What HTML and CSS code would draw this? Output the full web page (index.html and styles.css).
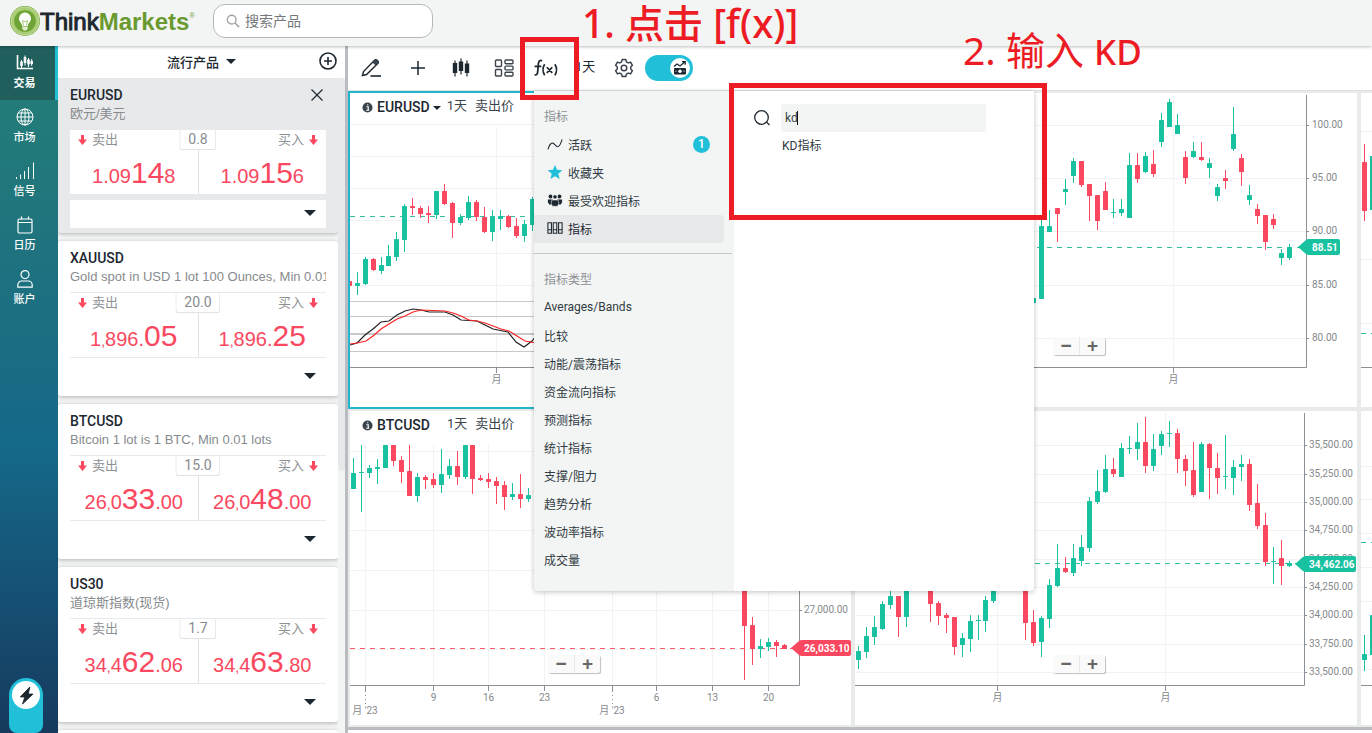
FILE: index.html
```html
<!DOCTYPE html>
<html lang="zh-CN">
<head>
<meta charset="utf-8">
<title>ThinkMarkets</title>
<link rel="stylesheet" href="styles.css">
</head>
<body>
<header class="topbar">
  <a class="logo" href="#" aria-label="ThinkMarkets">
    <svg class="logo-mark" viewBox="0 0 30 30"><circle cx="15" cy="15" r="15" fill="#6ea336"/><circle cx="15" cy="15" r="12.6" fill="none" stroke="#a9cc74" stroke-width="3.6"/><circle cx="15" cy="15" r="14" fill="none" stroke="#c3dc9c" stroke-width="0.8"/><path d="M15 6.500a6 6 0 0 0-6 6c0 3.400 3 4.500 3.200 7.500h5.600c.2-3 3.200-4.100 3.200-7.500a6 6 0 0 0-6-6z" fill="#fff"/><path d="M12.300 20.600h5.400v2.200l-1.500 1.600h-2.400l-1.500-1.600z" fill="#e4f0d2"/><path d="M13.500 19.500l-1-5 2.500 1.500 2.500-1.500-1 5" fill="none" stroke="#9cc267" stroke-width="0.9"/></svg>
    <span class="logo-text">Think<b>Markets</b><sup>®</sup></span>
  </a>
  <label class="search">
    <svg viewBox="0 0 16 16"><circle cx="6.500" cy="6.500" r="5" fill="none" stroke="#a3a6a8" stroke-width="1.600"/><path d="M10.300 10.300L15 15" stroke="#a3a6a8" stroke-width="1.800"/></svg>
    <input type="text" placeholder="搜索产品" aria-label="搜索产品">
  </label>
</header>

<div class="layout">
  <nav class="sidebar">
    <a class="nav-item active" href="#"><svg viewBox="0 0 18 18"><path d="M1.500 1v13.500H17" fill="none" stroke="#fff" stroke-width="1.600"/><path d="M5.500 6v8M9 1.500v10M12.500 4v9M15.700 5v7" stroke="#fff"/><path d="M5.500 7.500v4.500M9 3v6M12.500 5.500v5M15.700 7v3" stroke="#fff" stroke-width="2.600"/></svg>交易</a>
    <a class="nav-item" href="#"><svg viewBox="0 0 18 18" fill="none" stroke="#fff"><circle cx="9" cy="9" r="8"/><ellipse cx="9" cy="9" rx="4" ry="8"/><path d="M9 1v16M1 9h16M2.300 5h13.400M2.300 13h13.400"/></svg>市场</a>
    <a class="nav-item" href="#"><svg viewBox="0 0 18 18" stroke="#fff"><path d="M.5 15v2M4.500 12.500V17M8.500 9v8M12.500 5v12M17.500 .5V17"/></svg>信号</a>
    <a class="nav-item" href="#"><svg viewBox="0 0 18 18" fill="none" stroke="#fff" stroke-width="1.200"><rect x="2" y="3" width="14" height="14" rx="1.500"/><path d="M2 6.500h14M5.500 .5v3M12.500 .5v3"/></svg>日历</a>
    <a class="nav-item" href="#"><svg viewBox="0 0 18 18" fill="none" stroke="#fff" stroke-width="1.200"><circle cx="9" cy="4.600" r="4"/><path d="M1.800 17.200v-2.200a4 4 0 0 1 4-4h6.400a4 4 0 0 1 4 4v2.200z"/></svg>账户</a>
    <button class="quick" aria-label="快速交易"><span><svg viewBox="0 0 18 20"><path d="M12.500 1L2.500 11.500h4.800L4.800 19 15.800 8.500h-5z" fill="#1d2730" stroke="#1d2730" stroke-linejoin="round"/></svg></span></button>
  </nav>

  <aside class="watch">
    <div class="watch-head">
      <button class="watch-title">流行产品<i class="tri"></i></button>
      <button class="add" aria-label="添加"><svg viewBox="0 0 18 18" fill="none" stroke="#1d2730" stroke-width="1.600"><circle cx="9" cy="9" r="8"/><path d="M9 5v8M5 9h8"/></svg></button>
    </div>
    <div class="watch-body">
      <div class="cards">
        <article class="card selected">
          <h2>EURUSD</h2><p class="desc">欧元/美元</p>
          <button class="close" aria-label="关闭"><svg viewBox="0 0 14 14"><path d="M1.500 1.500l11 11M12.500 1.500l-11 11" stroke="#1d2730" stroke-width="1.200"/></svg></button>
          <div class="quote">
            <button class="side"><span class="lab"><svg class="dn" viewBox="0 0 10 11"><path d="M3.300 0h3.400v5H10L5 11 0 5h3.300z"/></svg>卖出</span><span class="px">1.09<b>14</b>8</span></button>
            <button class="side buy"><span class="lab">买入<svg class="dn" viewBox="0 0 10 11"><path d="M3.300 0h3.400v5H10L5 11 0 5h3.300z"/></svg></span><span class="px">1.09<b>15</b>6</span></button>
            <span class="spread">0.8</span>
          </div>
          <button class="more" aria-label="展开"><i class="tri"></i></button>
        </article>
        <article class="card">
          <h2>XAUUSD</h2><p class="desc">Gold spot in USD 1 lot 100 Ounces, Min 0.01 lots</p>
          <div class="quote">
            <button class="side"><span class="lab"><svg class="dn" viewBox="0 0 10 11"><path d="M3.300 0h3.400v5H10L5 11 0 5h3.300z"/></svg>卖出</span><span class="px">1<small>,</small>896.<b>05</b></span></button>
            <button class="side buy"><span class="lab">买入<svg class="dn" viewBox="0 0 10 11"><path d="M3.300 0h3.400v5H10L5 11 0 5h3.300z"/></svg></span><span class="px">1<small>,</small>896.<b>25</b></span></button>
            <span class="spread">20.0</span>
          </div>
          <button class="more" aria-label="展开"><i class="tri"></i></button>
        </article>
        <article class="card">
          <h2>BTCUSD</h2><p class="desc">Bitcoin 1 lot is 1 BTC, Min 0.01 lots</p>
          <div class="quote">
            <button class="side"><span class="lab"><svg class="dn" viewBox="0 0 10 11"><path d="M3.300 0h3.400v5H10L5 11 0 5h3.300z"/></svg>卖出</span><span class="px">26<small>,</small>0<b>33</b>.00</span></button>
            <button class="side buy"><span class="lab">买入<svg class="dn" viewBox="0 0 10 11"><path d="M3.300 0h3.400v5H10L5 11 0 5h3.300z"/></svg></span><span class="px">26<small>,</small>0<b>48</b>.00</span></button>
            <span class="spread">15.0</span>
          </div>
          <button class="more" aria-label="展开"><i class="tri"></i></button>
        </article>
        <article class="card">
          <h2>US30</h2><p class="desc">道琼斯指数(现货)</p>
          <div class="quote">
            <button class="side"><span class="lab"><svg class="dn" viewBox="0 0 10 11"><path d="M3.300 0h3.400v5H10L5 11 0 5h3.300z"/></svg>卖出</span><span class="px">34<small>,</small>4<b>62</b>.06</span></button>
            <button class="side buy"><span class="lab">买入<svg class="dn" viewBox="0 0 10 11"><path d="M3.300 0h3.400v5H10L5 11 0 5h3.300z"/></svg></span><span class="px">34<small>,</small>4<b>63</b>.80</span></button>
            <span class="spread">1.7</span>
          </div>
          <button class="more" aria-label="展开"><i class="tri"></i></button>
        </article>
        <article class="card"></article>
      </div>
      <div class="scroll"><i></i></div>
    </div>
  </aside>

  <main class="work">
    <div class="tools">
      <button aria-label="画图"><svg viewBox="0 0 20 20"><path d="M1.500 17.500l1-4L13.500 2.300a1.800 1.800 0 0 1 2.600 0l.7.7a1.800 1.800 0 0 1 0 2.600L5.500 16.500z" fill="none" stroke="#1d2730" stroke-width="1.400"/><path d="M11.500 4.500l3.300 3.200 2.200-2.200a2 2 0 0 0 0-2.600l-.7-.6a2 2 0 0 0-2.600 0z" fill="#3b444c"/><path d="M9.500 18h11" stroke="#1d2730" stroke-width="1.600"/></svg></button>
      <button class="insert" aria-label="添加"><svg viewBox="0 0 20 20"><path d="M10 3v14M3 10h14" stroke="#1d2730" stroke-width="1.500"/></svg></button>
      <button aria-label="图表类型"><svg viewBox="0 0 20 20"><path d="M4 2.500v16M10 .5v16M16 2.500v16" stroke="#1d2730" stroke-width="1.200"/><path d="M1.800 5h4.400v10H1.800zM7.800 3.500h4.400V13H7.800zM13.800 5.500h4.400V15h-4.400z" fill="#1d2730"/></svg></button>
      <button aria-label="布局"><svg viewBox="0 0 20 20" fill="none" stroke="#3b444c" stroke-width="1.400"><rect x="1.500" y="2" width="6" height="6.500" rx="1"/><rect x="1.500" y="11.500" width="6" height="6.500" rx="1"/><rect x="11" y="2" width="8" height="3.800" rx="1"/><rect x="11" y="8.100" width="8" height="3.800" rx="1"/><rect x="11" y="14.200" width="8" height="3.800" rx="1"/></svg></button>
      <button class="fx" aria-label="指标"><svg viewBox="0 0 24 20" fill="none" stroke="#1d2730" stroke-width="1.700"><path d="M8.800 2.600C6.500 1.500 5.500 3 5.200 5.200L4.500 13c-.2 2.500-1 3.500-3 3M1.500 8h6.500"/><path d="M11.200 6c-2 3-2 7.500 0 10.500M21 6c2 3 2 7.500 0 10.500M13.300 8.800l5.200 5.400M18.500 8.800l-5.200 5.400"/></svg></button>
      <button class="period">1天</button>
      <button aria-label="设置"><svg viewBox="0 0 20 20" fill="none" stroke="#3b444c" stroke-width="1.500"><path d="M8.200 1.500h3.600l.6 2.400 1.800 1 2.400-.7 1.800 3.100-1.700 1.700v2l1.700 1.700-1.800 3.100-2.400-.7-1.800 1-.6 2.400H8.200l-.6-2.400-1.800-1-2.400.7-1.800-3.100L3.300 11V9L1.600 7.300l1.800-3.100 2.400.7 1.800-1z" stroke-linejoin="round"/><circle cx="10" cy="10" r="2.800"/></svg></button>
      <button class="toggle" role="switch" aria-checked="true" aria-label="交易面板"><span><svg viewBox="0 0 14 14"><path d="M1 5.500l3-2.500 3 2 5-4.200M9 .7h3.200v3" fill="none" stroke="#1d2730" stroke-width="1.300"/><rect x="1" y="7" width="12" height="6.500" rx="1" fill="#1d2730"/><circle cx="7" cy="10.200" r="1.700" fill="#fff"/><path d="M2.500 10.200h1M10.500 10.200h1" stroke="#fff"/></svg></span></button>
    </div>

    <div class="desk">
      <section class="pane active">
        <div class="pane-head"><svg viewBox="0 0 12 12"><circle cx="6" cy="6" r="5.500"/><path d="M4.800 5.200h2v3.500M4.500 9h3.400M5.600 3h1.200" stroke="#fff" stroke-width="1.300" fill="none"/></svg><b>EURUSD</b><i class="tri small"></i><span>1天</span><span class="kind">卖出价</span></div>
        <svg class="plot" id="eurusd" viewBox="350 93 501 314" preserveAspectRatio="xMinYMin slice"></svg>
      </section>
      <section class="pane">
        <svg class="plot" id="oil" viewBox="855 93 502 314" preserveAspectRatio="xMinYMin slice"></svg>
        <div class="zoomer"><button aria-label="缩小">−</button><button aria-label="放大">+</button></div>
      </section>
      <section class="pane edge">
        <svg class="plot" id="edge1" viewBox="1361 93 11 314" preserveAspectRatio="xMinYMin slice"></svg>
      </section>
      <section class="pane">
        <div class="pane-head"><svg viewBox="0 0 12 12"><circle cx="6" cy="6" r="5.500"/><path d="M4.800 5.200h2v3.500M4.500 9h3.400M5.600 3h1.200" stroke="#fff" stroke-width="1.300" fill="none"/></svg><b>BTCUSD</b><i class="tri small none"></i><span>1天</span><span class="kind">卖出价</span></div>
        <svg class="plot" id="btcusd" viewBox="350 411 501 314" preserveAspectRatio="xMinYMin slice"></svg>
        <div class="zoomer"><button aria-label="缩小">−</button><button aria-label="放大">+</button></div>
      </section>
      <section class="pane">
        <svg class="plot" id="us30" viewBox="855 411 502 314" preserveAspectRatio="xMinYMin slice"></svg>
        <div class="zoomer"><button aria-label="缩小">−</button><button aria-label="放大">+</button></div>
      </section>
      <section class="pane edge">
        <svg class="plot" id="edge2" viewBox="1361 411 11 314" preserveAspectRatio="xMinYMin slice"></svg>
      </section>

      <div class="popup">
        <div class="menu">
          <h3>指标</h3>
          <button><svg viewBox="0 0 18 14"><path d="M1 13C3 8 4 5.500 6.500 6c2.500.5 3 4 5.500 4 2.500 0 3.500-4 5-8" fill="none" stroke="#1d2730" stroke-width="1.200"/></svg>活跃<em>1</em></button>
          <button><svg viewBox="0 0 18 18"><path d="M9 1l2.300 5.600 6 .5-4.600 3.900 1.500 5.900L9 13.700 3.800 16.900 5.300 11 .7 7.100l6-.5z" fill="#22bfd9"/></svg>收藏夹</button>
          <button><svg viewBox="0 0 18 16" fill="#1d2730"><circle cx="4" cy="4" r="2.200"/><circle cx="14" cy="4" r="2.200"/><circle cx="9" cy="4.500" r="2.500" stroke="#f3f5f4"/><path d="M1 7.500h5.500L8 13H2.500L1 10.500zM17 7.500h-5.500L10 13h5.500l1.500-2.500z"/><path d="M5.500 8h7l.8 3.500L12 15H6l-1.300-3.500z" stroke="#f3f5f4" stroke-width=".6"/></svg>最受欢迎指标</button>
          <button class="on"><svg viewBox="0 0 18 14" fill="none" stroke="#1d2730" stroke-width="1.200"><path d="M1 1h4v12H1zM7 1h4v12H7zM13 1h4v12h-4zM1 9h4M7 9h4M13 9h4"/></svg>指标</button>
          <hr>
          <h3>指标类型</h3>
          <button>Averages/Bands</button>
          <button>比较</button>
          <button>动能/震荡指标</button>
          <button>资金流向指标</button>
          <button>预测指标</button>
          <button>统计指标</button>
          <button>支撑/阻力</button>
          <button>趋势分析</button>
          <button>波动率指标</button>
          <button>成交量</button>
        </div>
        <div class="results">
          <label class="find"><svg viewBox="0 0 16 16"><circle cx="7.500" cy="7.500" r="6.800" fill="none" stroke="#1d2730" stroke-width="1.300"/><path d="M12.500 12l3 3" stroke="#1d2730" stroke-width="1.300"/></svg><input type="text" value="kd" aria-label="搜索指标"><i class="caret"></i></label>
          <button class="hit">KD指标</button>
        </div>
      </div>
    </div>
  </main>
</div>

<div class="frame frame-fx"></div>
<div class="frame frame-find"></div>
<div class="note note-one">1. 点击 [f(x)]</div>
<div class="note note-two">2. 输入 <span>KD</span></div>
<script src="charts.js"></script>
</body>
</html>
```
FILE: styles.css
```css
* { box-sizing: border-box; }
body {
  margin: 0;
  height: 100vh;
  overflow: hidden;
  display: flex;
  flex-direction: column;
  position: relative;
  background: #fff;
  color: #1d2730;
  font-family: Roboto, "Noto Sans CJK SC", sans-serif;
  font-size: 12px;
}
button {
  font: inherit;
  color: inherit;
  background: none;
  border: 0;
  padding: 0;
  margin: 0;
}
a { color: inherit; text-decoration: none; }
svg { display: block; flex: none; }
h2, h3, p { margin: 0; }

.topbar {
  flex: none;
  height: 46px;
  display: flex;
  align-items: flex-start;
  gap: 20px;
  padding: 4px 10px;
  background: #f3f5f4;
  box-shadow: 0 1px 3px rgba(0, 0, 0, 0.25);
  z-index: 2;
}
.logo { display: flex; align-items: center; height: 34px; width: 183px; }
.logo-mark { width: 30px; height: 30px; }
.logo-text {
  font-family: "Liberation Sans", sans-serif;
  font-size: 24px;
  line-height: 34px;
  padding-top: 2px;
  white-space: nowrap;
  -webkit-text-stroke: 1px currentColor;
}
.logo-text b { color: #6a9a2f; -webkit-text-stroke: 0; }
.logo-text sup { font-size: 7px; color: #6a9a2f; vertical-align: 12px; line-height: 0; -webkit-text-stroke: 0; }
.search {
  width: 220px;
  height: 34px;
  display: flex;
  align-items: center;
  gap: 5px;
  padding: 0 12px;
  border: 1px solid #b5b8ba;
  border-radius: 12px;
  background: #fff;
}
.search svg { width: 14px; height: 14px; }
.search input {
  flex: 1;
  min-width: 0;
  border: 0;
  outline: 0;
  padding: 0;
  background: none;
  font: 14px Roboto, "Noto Sans CJK SC", sans-serif;
}
.search input::placeholder { color: #75797c; }

.layout { flex: 1; min-height: 0; display: flex; }

.sidebar {
  width: 58px;
  flex: none;
  display: flex;
  flex-direction: column;
  background: linear-gradient(#237d78 0, #22797a 15%, #1b6c83 45%, #15698a 58%, #163a5e 100%);
  color: #fff;
}
.nav-item {
  height: 54px;
  display: flex;
  flex-direction: column;
  align-items: center;
  gap: 3px;
  padding: 8px 6px 0 0;
  border-right: 3px solid transparent;
  font-size: 11px;
  line-height: 18px;
  font-weight: 500;
}
.nav-item.active { background: #205f5c; border-color: #22bfd9; font-weight: 700; }
.nav-item svg { width: 18px; height: 18px; }
.quick {
  width: 34px;
  height: 55px;
  margin: auto 0 0 9px;
  padding: 3px;
  border-radius: 17px 17px 8px 8px;
  background: #22bfd9;
  display: flex;
}
.quick span {
  width: 28px;
  height: 28px;
  border-radius: 50%;
  background: #fff;
  display: flex;
  align-items: center;
  justify-content: center;
}
.quick svg { width: 17px; height: 19px; }

.tri {
  display: inline-block;
  border: 6px solid transparent;
  border-top-color: #1d2730;
  border-bottom: 0;
}
.watch { width: 287px; flex: none; display: flex; flex-direction: column; }
.watch-head {
  height: 32px;
  flex: none;
  display: flex;
  align-items: center;
  justify-content: flex-end;
  gap: 83px;
  padding: 0 8px 2px;
}
.watch-title { display: flex; align-items: center; gap: 7px; font-size: 13px; font-weight: 500; }
.watch-title .tri { border-width: 5px; border-bottom: 0; }
.add svg { width: 18px; height: 18px; }
.watch-body { flex: 1; min-height: 0; display: flex; background: #f3f5f4; }
.cards { flex: 1; min-width: 0; display: flex; flex-direction: column; gap: 8px; overflow: hidden; }
.scroll { width: 7px; }
.scroll i { display: block; height: 60%; border-radius: 4px; background: #e6e8ea; }
.card {
  position: relative;
  flex: none;
  height: 155px;
  padding: 8px 12px 5px;
  background: #fff;
  border-radius: 3px;
  box-shadow: 0 1px 4px rgba(0, 0, 0, 0.28);
}
.card.selected { background: #e7e9eb; }
.card h2 { font-size: 14px; line-height: 19px; font-weight: 500; }
.desc {
  font: 13px/18px "Liberation Sans", "Noto Sans CJK SC", sans-serif;
  height: 24px;
  color: #878b8e;
  white-space: nowrap;
  overflow: hidden;
}
.close { position: absolute; right: 14px; top: 10px; }
.close svg { width: 14px; height: 14px; }
.quote {
  position: relative;
  display: flex;
  height: 66px;
  border: solid #e7e9eb;
  border-width: 1px 0;
  background: #fff;
}
.side {
  flex: 1;
  display: flex;
  flex-direction: column;
  align-items: center;
  justify-content: flex-start;
  color: #fa4860;
}
.side + .side { border-left: 1px solid #e0e2e4; }
.lab {
  align-self: stretch;
  display: flex;
  align-items: center;
  gap: 5px;
  height: 22px;
  padding: 0 8px;
  font-size: 13px;
  line-height: 20px;
  color: #8d9194;
}
.buy .lab { justify-content: flex-end; }
.dn { width: 9px; height: 10px; fill: #fa4860; }
.px { font: 20px/46px "Liberation Sans", sans-serif; white-space: nowrap; }
.px b { font-size: 30px; font-weight: 400; }
.px small { font-size: 14px; }
.spread {
  position: absolute;
  left: 50%;
  top: 0;
  transform: translateX(-50%);
  padding: 0 8px;
  font: 14px/19px Roboto, sans-serif;
  color: #878b8e;
  background: #fff;
  border: 1px solid #e0e2e4;
  border-top: 0;
  border-radius: 0 0 3px 3px;
}
.more {
  width: 100%;
  height: 28px;
  margin-top: 5px;
  padding: 0 10px 2px 0;
  background: #fff;
  display: flex;
  align-items: center;
  justify-content: flex-end;
}

.work {
  flex: 1;
  min-width: 0;
  display: flex;
  flex-direction: column;
  border-left: 3px solid #b9bcc1;
}
.tools {
  height: 45px;
  flex: none;
  display: flex;
  align-items: center;
  gap: 23px;
  padding: 0 13px;
  border-bottom: 1px solid #dfe2e3;
}
.tools > button > svg { width: 20px; height: 20px; }
.tools > .insert { margin-left: 4px; }
.tools > .fx { margin-left: -4px; }
.tools > .fx svg { width: 25px; height: 21px; }
.tools .period { font-size: 13px; margin-left: -6px; line-height: 18px; padding-bottom: 2px; }
.tools .period + button { margin-left: -4px; }
.toggle {
  width: 48px;
  height: 26px;
  padding: 3px;
  margin-left: -12px;
  border-radius: 13px;
  background: #22bfd9;
  display: flex;
  justify-content: flex-end;
}
.tools > .toggle { padding: 3px; }
.toggle span { width: 20px; height: 20px; border-radius: 50%; background: #fff; display: flex; align-items: center; justify-content: center; }
.toggle svg { width: 14px; height: 14px; }

.desk {
  flex: 1;
  min-height: 0;
  position: relative;
  display: grid;
  grid-template-columns: 505fr 506fr 13fr;
  grid-template-rows: minmax(0, 1fr) minmax(0, 1fr);
  border-bottom: 3px solid #b9bcc1;
  margin-bottom: 3px;
}
.pane { position: relative; min-width: 0; border: 2px solid #e8ebea; overflow: hidden; }
.pane.active { border-color: #22b5cd; }
.pane.edge { border-right: 0; }
.plot { width: 100%; height: 100%; }
.pane-head {
  position: absolute;
  left: 0;
  top: 0;
  display: flex;
  align-items: center;
  height: 28px;
  padding: 0 12px;
  font-size: 14px;
  line-height: 18px;
  color: #3b444c;
}
.pane-head svg { width: 11px; height: 11px; margin-right: 4px; fill: #3b444c; }
.pane-head b { font-weight: 500; color: #1d2730; }
.pane-head span { font-size: 13px; padding-bottom: 2px; }
.pane-head .kind { margin-left: 8px; }
.tri.small { border-width: 4px; border-bottom: 0; margin: 2px 6px 0 3px; }
.tri.none { visibility: hidden; }
.zoomer {
  position: absolute;
  left: 198px;
  bottom: 52px;
  display: flex;
  border-radius: 2px;
  background: #fafafa;
  box-shadow: 1px 1px 1px rgba(0, 0, 0, 0.25);
}
.zoomer button { width: 26px; height: 18px; font: 700 19px/18px "Liberation Sans", sans-serif; color: #666; }
.zoomer button + button { border-left: 1px solid #e8e8e8; }

.popup {
  position: absolute;
  left: 186px;
  top: 0;
  width: 500px;
  height: 500px;
  display: flex;
  background: #fff;
  border-radius: 0 0 4px 4px;
  box-shadow: 0 1px 5px rgba(0, 0, 0, 0.25);
}
.menu { width: 200px; padding: 12px 2px 0 0; background: #f3f5f4; display: flex; flex-direction: column; color: #303a42; border-radius: 0 0 0 4px; }
.menu h3 { font-size: 12px; line-height: 28px; font-weight: 400; color: #8d9194; padding-left: 10px; }
.menu button {
  height: 28px;
  margin-right: 8px;
  padding: 0 14px 2px 10px;
  display: flex;
  align-items: center;
  text-align: left;
  border-radius: 0 4px 4px 0;
}
.menu button svg { width: 16px; height: 16px; margin: 0 5px 0 3px; }
.menu button.on { background: #e7e8ea; color: #1d2730; }
.menu em {
  margin-left: auto;
  width: 17px;
  height: 17px;
  border-radius: 50%;
  background: #22bfd9;
  color: #fff;
  font: 500 12px/17px Roboto, sans-serif;
  text-align: center;
}
.menu hr { width: 100%; margin: 10px 0 12px; border: 0; border-top: 1px solid #c6c9cb; }
.results { flex: 1; padding: 13px 48px 0 20px; color: #303a42; }
.find { display: flex; align-items: center; gap: 11px; position: relative; }
.find svg { width: 16px; height: 16px; }
.find input {
  flex: 1;
  min-width: 0;
  height: 28px;
  padding: 0 4px;
  border: 0;
  outline: 0;
  border-radius: 3px;
  background: #f3f5f4;
  font: 12px Roboto, sans-serif;
  color: #3b444c;
}
.caret { position: absolute; left: 43px; top: 7px; width: 1px; height: 14px; background: #111; }
.hit { margin-left: 28px; line-height: 28px; }

.frame { position: absolute; border: 5px solid #ed1c24; z-index: 4; }
.frame-fx { left: 520px; top: 37px; width: 59px; height: 63px; }
.frame-find { left: 729px; top: 83px; width: 318px; height: 137px; }
.note {
  position: absolute;
  z-index: 4;
  color: #ed1c24;
  font-family: "Noto Sans", "Noto Sans CJK SC", sans-serif;
  font-size: 39px;
  line-height: 44px;
  white-space: nowrap;
}
.note-one { left: 582px; top: 1px; font-weight: 500; }
.note-two { left: 963px; top: 28px; }
.note span { font-size: 35px; font-weight: 500; }

.grid-line { stroke: #f1f2f2; }
.study-line { stroke: #c6c8ca; }
.axis { stroke: #8b9096; fill: none; }
.label { font: 10px Roboto, "Noto Sans CJK SC", sans-serif; fill: #85898c; }
.tag-text { font: 700 10px Roboto, sans-serif; fill: #fff; }
.up { fill: #18c19f; }
.down { fill: #fa4860; }
.up-line { stroke: #35bfa2; stroke-dasharray: 5 5; }
.down-line { stroke: #fa5a70; stroke-dasharray: 5 5; }
```
FILE: charts.js
```js
const NS = 'http://www.w3.org/2000/svg';

function add(svg, name, attrs, text) {
  const el = document.createElementNS(NS, name);
  for (const key in attrs) el.setAttribute(key, attrs[key]);
  if (text) el.textContent = text;
  svg.appendChild(el);
}

function line(svg, cls, x1, y1, x2, y2) {
  add(svg, 'line', { class: cls, x1, y1, x2, y2 });
}

// Each candle: x, high, body top, body bottom, low, u(p) or d(own)
function candles(svg, data) {
  data.trim().split(/\s+/).forEach(row => {
    const [x, hi, top, bot, lo, dir] = row.split(',');
    const cls = dir === 'u' ? 'up' : 'down';
    add(svg, 'rect', { class: cls, x: +x, y: +hi, width: 1, height: lo - hi });
    add(svg, 'rect', { class: cls, x: x - 2, y: +top, width: 5, height: bot - top, rx: 0.5 });
  });
}

function draw(id, c) {
  const svg = document.getElementById(id);
  c.rows.forEach(y => line(svg, 'grid-line', c.left, y + 0.5, c.right, y + 0.5));
  c.cols.forEach(x => line(svg, 'grid-line', x + 0.5, c.top, x + 0.5, c.bottom));
  (c.study || []).forEach(y => line(svg, 'study-line', c.left, y + 0.5, c.right, y + 0.5));
  line(svg, c.dir + '-line', c.left, c.last + 0.5, c.right, c.last + 0.5);
  candles(svg, c.data);
  add(svg, 'path', { class: 'axis', d: `M${c.left} ${c.bottom + 0.5}H${c.right + 0.5}V${c.top}` });
  (c.curves || []).forEach(([color, points]) =>
    add(svg, 'polyline', { points, fill: 'none', stroke: color, 'stroke-width': 1.2 }));
  (c.prices || []).forEach(([y, text]) => {
    line(svg, 'axis', c.right, y + 0.5, c.right + 3, y + 0.5);
    add(svg, 'text', { class: 'label', x: c.labelX, y: y + 3 }, text);
  });
  (c.dates || []).forEach(([x, text]) => {
    line(svg, 'axis', x + 0.5, c.bottom, x + 0.5, c.bottom + 6);
    add(svg, 'text', { class: 'label', x: x + 0.5, y: c.bottom + 16, 'text-anchor': 'middle' }, text);
  });
  (c.months || []).forEach(x => {
    add(svg, 'path', { class: 'axis', d: `M${x + 0.5} ${c.bottom}v6` });
    add(svg, 'path', { class: 'axis', 'stroke-dasharray': '1 3', d: `M${x + 0.5} ${c.bottom + 6}v14` });
    add(svg, 'text', { class: 'label', x, y: c.bottom + 29, 'text-anchor': 'middle' }, "月 '23");
  });
  if (c.tag) {
    const [x, y, w, text] = c.tag;
    add(svg, 'path', { class: c.dir, d: `M${x} ${y + 8}l8 -7q1 -1 3 -1H${x + w - 2}q2 0 2 2v12q0 2 -2 2H${x + 11}q-2 0 -3 -1z` });
    add(svg, 'text', { class: 'tag-text', x: c.labelX, y: y + 12 }, text);
  }
}

draw('eurusd', {
  left: 350, right: 800, top: 127, bottom: 367, last: 216, dir: 'up',
  rows: [124, 156, 188, 220, 253, 285], cols: [496], study: [301, 316, 333, 334, 351],
  dates: [[496, '月']],
  data: `349,281,281,286,286,d 357,272,283,286,295,u 365,257,259,284,285,u 373,258,259,270,271,d 381,257,265,271,274,u
  388,245,256,266,266,u 396,232,239,257,261,u 404,204,206,240,252,u 412,198,206,208,215,d 420,206,208,214,218,d
  428,206,213,215,223,d 436,191,191,215,219,u 444,184,191,204,205,d 452,202,203,223,238,d 460,214,217,223,225,u
  468,196,202,218,220,u 476,200,202,217,221,d 484,207,217,232,233,d 492,210,217,232,241,u 500,210,216,219,230,u
  508,215,216,227,228,d 516,218,226,236,238,d 524,220,224,236,242,u 532,197,199,225,231,u`,
  curves: [
    ['#222', '350,345 357,343 365,335 373,329 381,322 389,321 397,315 405,311 413,309 421,310 429,312 445,312 453,315 461,320 477,321 485,325 493,329 508,332 516,342 524,347 532,341 536,336'],
    ['#f22', '350,344 357,343 366,341 373,336 381,329 389,324 397,319 405,316 413,312 421,310 445,311 453,313 461,316 469,320 477,321 485,323 493,326 501,329 509,331 517,336 525,341 536,343']
  ]
});

draw('oil', {
  left: 857, right: 1306, top: 95, bottom: 367, last: 247, dir: 'up', labelX: 1312,
  rows: [125, 178, 231, 285, 338], cols: [1173], dates: [[1173, '月']],
  prices: [[125, '100.00'], [178, '95.00'], [231, '90.00'], [285, '85.00'], [338, '80.00']],
  tag: [1298, 239, 42, '88.51'],
  data: `1033,298,298,303,303,u 1041,219,226,299,299,u 1049,210,226,232,232,u 1057,208,208,214,242,d 1065,179,189,192,205,u
  1073,158,161,176,183,u 1081,161,161,185,187,d 1089,184,184,196,221,d 1097,195,195,221,230,d 1105,182,191,210,210,d
  1113,199,212,213,218,u 1121,199,209,213,216,u 1129,153,165,218,218,u 1137,153,165,179,183,d 1145,152,156,172,173,u
  1153,150,164,174,177,d 1161,113,120,142,147,u 1169,99,102,127,127,u 1177,114,125,134,134,u 1185,151,157,178,184,d
  1193,142,151,157,158,u 1201,142,157,160,161,d 1209,158,163,168,178,u 1217,184,187,196,201,u 1225,170,178,181,189,d
  1233,107,134,149,151,u 1241,154,158,172,186,d 1249,185,195,200,205,u 1257,204,209,216,224,d 1265,215,215,242,250,d
  1273,214,219,225,229,d 1281,249,253,258,265,u 1289,244,247,258,260,u`
});

draw('edge1', {
  left: 1361, right: 1380, top: 95, bottom: 367, last: 333, dir: 'up',
  rows: [131, 195, 259, 323], cols: [],
  data: '1364,144,162,211,221,d 1372,150,156,210,215,u'
});

draw('btcusd', {
  left: 350, right: 799, top: 445, bottom: 685, last: 648, dir: 'down', labelX: 804,
  rows: [451, 491, 530, 570, 610, 649], cols: [365, 433, 488, 544, 612, 656, 712, 768],
  prices: [[610, '27,000.00']],
  dates: [[433, '9'], [488, '16'], [544, '23'], [656, '6'], [712, '13'], [768, '20']],
  months: [365, 612],
  tag: [791, 640, 60, '26,033.10'],
  data: `353,458,473,489,489,u 361,445,472,473,512,u 369,465,468,473,478,u 377,459,467,469,484,u 385,445,445,468,468,u
  393,445,445,461,466,d 401,456,460,472,483,d 409,445,471,496,496,d 417,473,477,496,502,u 425,475,477,480,489,d
  433,473,479,485,488,d 441,449,474,485,493,u 449,459,466,475,479,u 457,451,466,477,485,d 465,445,445,477,479,u
  472,445,445,479,494,d 480,475,478,480,481,d 488,473,479,482,488,d 496,477,481,486,504,d 504,481,485,497,510,d
  512,483,494,497,500,u 520,474,494,499,508,d 528,488,495,499,502,u
  744,560,560,626,680,d 752,617,625,649,665,d 760,639,646,649,658,u 768,638,642,647,651,u 776,640,642,646,657,d 784,644,645,649,649,d`
});

draw('us30', {
  left: 855, right: 1304, top: 413, bottom: 685, last: 563, dir: 'up', labelX: 1309,
  rows: [445, 474, 502, 530, 559, 587, 615, 644, 672], cols: [997, 1165],
  dates: [[997, '月'], [1165, '月']],
  prices: [[445, '35,500.00'], [474, '35,250.00'], [502, '35,000.00'], [530, '34,750.00'], [559, '34,500.00'],
    [587, '34,250.00'], [615, '34,000.00'], [644, '33,750.00'], [672, '33,500.00']],
  tag: [1295, 556, 61, '34,462.06'],
  data: `858,646,651,660,669,u 866,627,636,652,658,u 874,616,627,637,645,u 882,601,604,629,630,u 890,580,596,605,609,u
  898,596,596,617,637,d 906,580,580,617,627,u 930,580,580,604,622,d 938,601,603,616,625,d 946,613,615,618,633,d
  954,617,617,647,655,d 962,633,638,645,657,u 970,615,621,639,652,u 978,615,620,621,640,u 985,596,600,621,632,u
  993,580,580,601,603,u 1025,580,580,623,640,d 1033,610,622,643,646,d 1041,616,618,642,657,u 1049,579,585,619,628,u
  1057,544,568,586,587,u 1065,557,568,572,573,d 1073,544,558,573,576,u 1081,535,547,561,566,u 1089,497,501,548,552,u
  1097,470,491,502,504,u 1105,455,469,492,493,u 1113,458,469,474,477,d 1121,443,448,477,477,u 1129,436,448,449,454,u
  1137,423,442,449,460,u 1145,417,442,466,473,d 1153,434,449,466,471,u 1161,431,434,446,455,u 1169,421,433,434,447,u
  1177,429,433,459,473,d 1185,455,459,471,486,d 1193,442,470,495,497,d 1201,442,444,492,492,u 1209,443,444,468,499,d
  1217,453,468,478,494,d 1225,435,476,477,489,u 1233,460,467,478,495,u 1241,455,464,467,481,u 1249,459,464,505,511,d
  1257,484,503,526,529,d 1265,513,525,562,566,d 1273,547,561,562,584,u 1281,540,558,566,585,d 1289,561,563,566,567,u`
});

draw('edge2', {
  left: 1361, right: 1380, top: 413, bottom: 685, last: 542, dir: 'up',
  rows: [466, 499, 533, 567, 601, 635, 669], cols: [],
  data: '1364,635,654,660,671,u 1372,610,615,655,660,u'
});
```
